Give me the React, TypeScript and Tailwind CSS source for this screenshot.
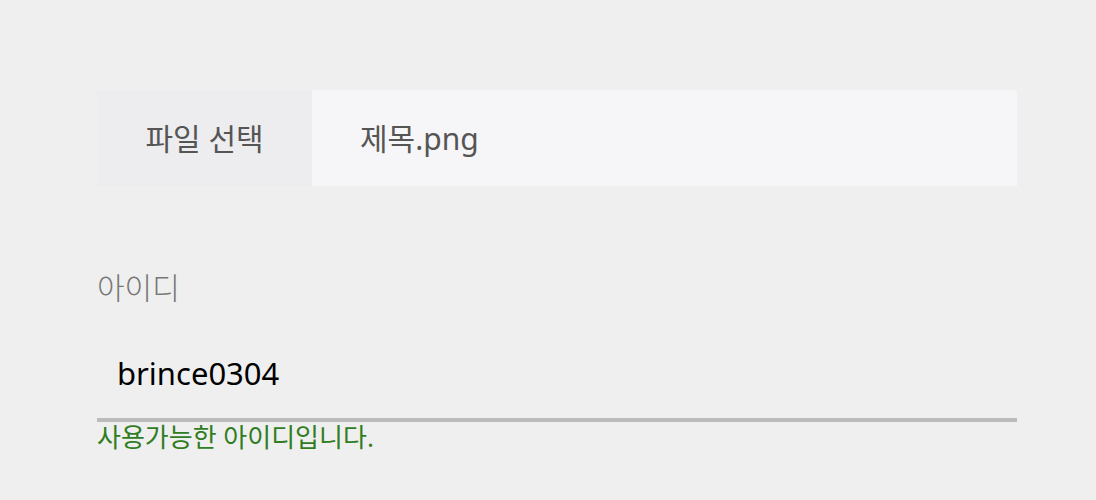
export default function App() {
  return (
    <div className="w-[1096px] h-[500px] bg-[#efefef] pt-[90px] px-[97px] font-['Noto_Sans','Noto_Sans_CJK_KR',sans-serif]">
      {/* File picker */}
      <div className="flex h-[96px] w-[920px]">
        <div className="flex w-[215px] items-center justify-center bg-[#ededef] text-[30px] text-[#555]">
          파일 선택
        </div>
        <div className="flex flex-1 items-center bg-[#f6f6f8] pl-[48px] text-[30px] text-[#555]">
          제목.png
        </div>
      </div>

      {/* ID field */}
      <div className="mt-[82px] w-[920px]">
        <label className="block text-[30px] leading-[40px] font-light text-[#777]">아이디</label>
        <div className="mt-[45px] border-b-[4px] border-[#bbbbbb] px-[20px] pb-[25px] text-[31px] leading-[40px] text-black">
          brince0304
        </div>
        <p className="text-[26px] leading-[30px] text-[#2f7d1f]">사용가능한 아이디입니다.</p>
      </div>
    </div>
  );
}
